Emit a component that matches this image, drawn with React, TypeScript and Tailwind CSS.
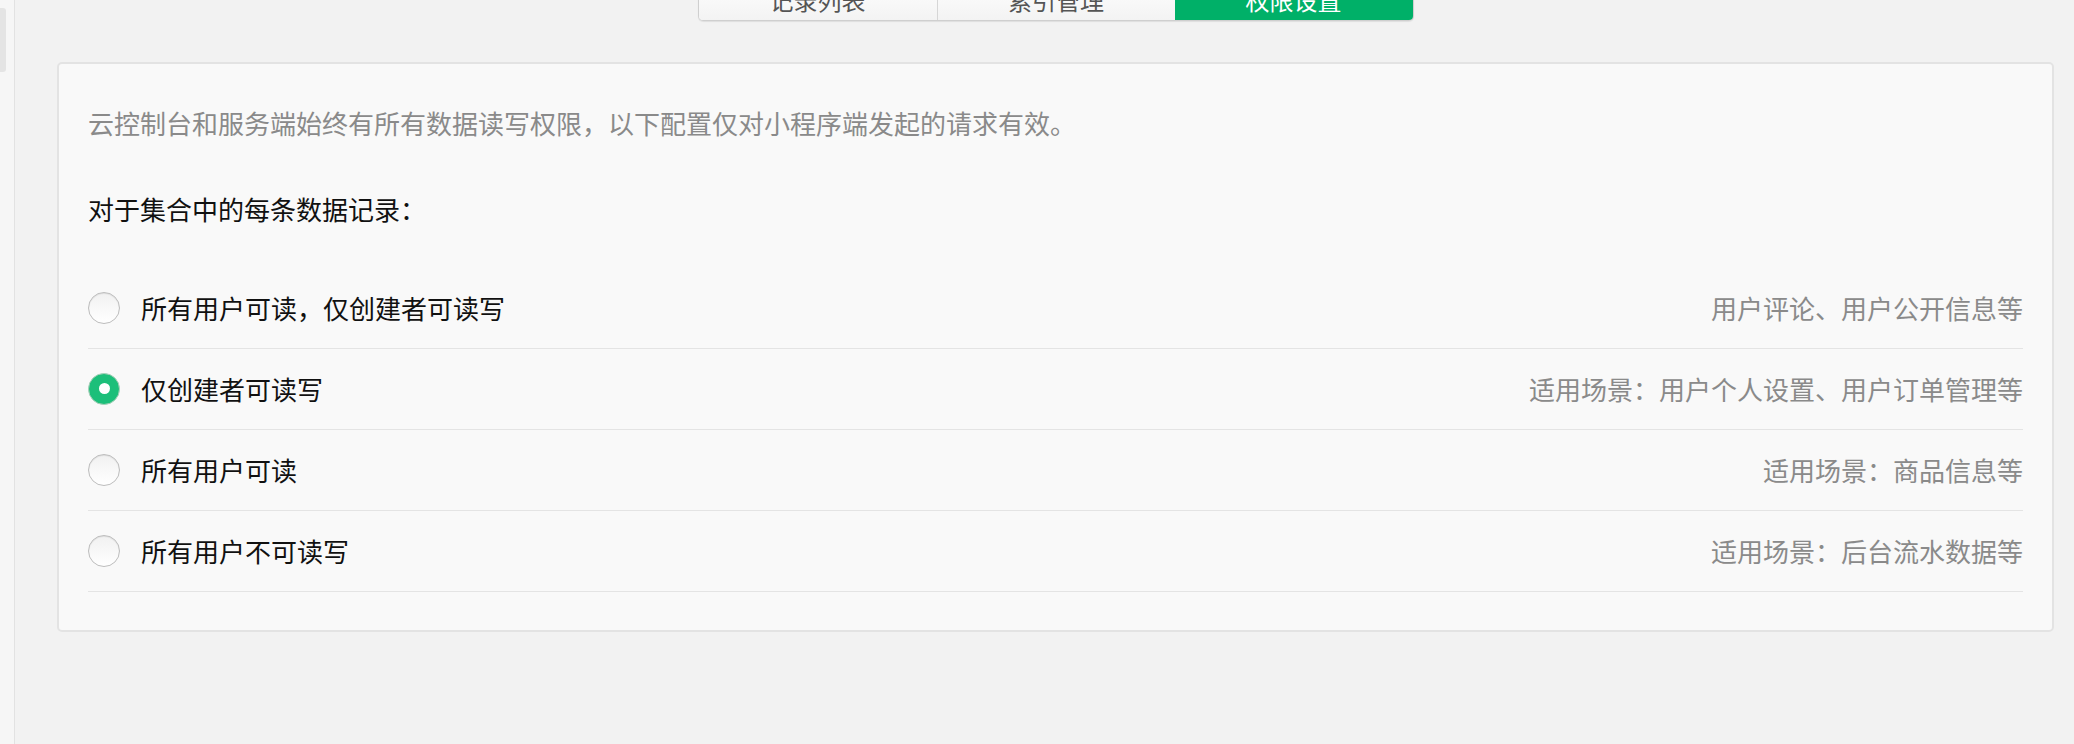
const tabs = [
  { label: '记录列表', active: false },
  { label: '索引管理', active: false },
  { label: '权限设置', active: true },
]

const rules = [
  { label: '所有用户可读，仅创建者可读写', hint: '用户评论、用户公开信息等' },
  { label: '仅创建者可读写', hint: '适用场景：用户个人设置、用户订单管理等' },
  { label: '所有用户可读', hint: '适用场景：商品信息等' },
  { label: '所有用户不可读写', hint: '适用场景：后台流水数据等' },
]

function Radio({ checked }: { checked: boolean }) {
  if (checked) {
    return (
      <span className="flex h-[32px] w-[32px] shrink-0 items-center justify-center rounded-full border border-[#a9cfb9] bg-[#1cbf7a]">
        <span className="h-[11px] w-[11px] rounded-full bg-white" />
      </span>
    )
  }
  return (
    <span className="h-[32px] w-[32px] shrink-0 rounded-full border border-[#bdbdbd] bg-gradient-to-b from-[#f1f1f1] to-white shadow-[inset_0_1px_1px_rgba(0,0,0,0.08)]" />
  )
}

export default function App() {
  const selected = 1

  return (
    <div className="flex h-[744px] w-full overflow-hidden bg-[#f2f2f2] font-['Noto_Sans_CJK_SC','Noto_Sans',sans-serif]">
      <aside className="w-[15px] shrink-0 border-r border-[#e2e2e2] bg-[#f6f6f6] pt-[8px]">
        <div className="h-[64px] w-[6px] rounded-r-[3px] bg-[#e4e4e4]" />
      </aside>

      <main className="flex-1 pl-[42px] pr-[20px]">
        <div className="flex h-[21px] justify-center">
          <div className="-mt-[21px] flex h-[42px] overflow-hidden rounded-b-[5px] border border-t-0 border-[#cfcfcf] shadow-[0_1px_1px_rgba(0,0,0,0.08)]">
            {tabs.map((tab, index) => (
              <div
                key={tab.label}
                className={[
                  'flex w-[238px] items-center justify-center text-[24px] leading-none',
                  tab.active
                    ? 'bg-[#00b068] text-white'
                    : 'bg-gradient-to-b from-white to-[#f3f3f3] text-[#555]',
                  index > 0 && !tab.active ? 'border-l border-[#d6d6d6]' : '',
                ].join(' ')}
              >
                {tab.label}
              </div>
            ))}
          </div>
        </div>

        <section className="mt-[41px] rounded-[5px] border-2 border-[#e3e3e3] bg-[#f9f9f9] px-[29px] pb-[38px] pt-[41px]">
          <p className="text-[26px] leading-[36px] text-[#8a8a8a]">
            云控制台和服务端始终有所有数据读写权限，以下配置仅对小程序端发起的请求有效。
          </p>
          <p className="mt-[50px] text-[26px] leading-[36px] text-[#111]">
            对于集合中的每条数据记录：
          </p>

          <ul className="mt-[41px]">
            {rules.map((rule, index) => (
              <li
                key={rule.label}
                className="flex h-[81px] items-center border-b border-[#e4e4e4] pb-[1px]"
              >
                <Radio checked={index === selected} />
                <span className="ml-[21px] text-[26px] leading-[36px] text-[#111]">
                  {rule.label}
                </span>
                <span className="ml-auto text-[26px] leading-[36px] text-[#8a8a8a]">
                  {rule.hint}
                </span>
              </li>
            ))}
          </ul>
        </section>
      </main>
    </div>
  )
}
